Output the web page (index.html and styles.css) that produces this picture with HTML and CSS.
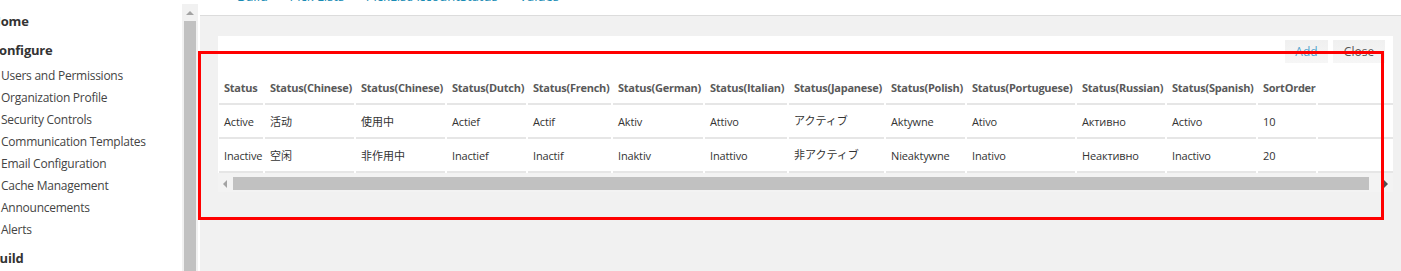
FILE: index.html
```html
<!DOCTYPE html>
<html lang="en">
<head>
<meta charset="utf-8">
<title>Picklist Values</title>
<link rel="stylesheet" href="styles.css">
</head>
<body>
<aside class="sidebar">
  <nav class="nav">
    <div class="nav-title first">Home</div>
    <div class="nav-title">Configure</div>
    <ul class="nav-list">
      <li>Users and Permissions</li>
      <li>Organization Profile</li>
      <li>Security Controls</li>
      <li>Communication Templates</li>
      <li>Email Configuration</li>
      <li>Cache Management</li>
      <li>Announcements</li>
      <li>Alerts</li>
    </ul>
    <div class="nav-title last">Build</div>
  </nav>
</aside>
<div class="vscroll">
  <div class="arrow-up"></div>
  <div class="vthumb"></div>
</div>
<main class="main">
  <div class="crumb-bar">
    <div class="crumb">Build &gt;&gt; Pick Lists &gt;&gt; PickListAccountStatus &gt;&gt; Values</div>
  </div>
  <div class="content">
    <section class="card">
      <div class="toolbar">
        <button class="btn btn-add">Add</button>
        <button class="btn btn-close">Close</button>
      </div>
      <div class="table-wrap">
        <table class="grid">
          <thead>
            <tr>
              <th class="w44">Status</th>
              <th class="w89">Status(Chinese)</th>
              <th class="w89">Status(Chinese)</th>
              <th class="w79">Status(Dutch)</th>
              <th class="w83">Status(French)</th>
              <th class="w90">Status(German)</th>
              <th class="w82">Status(Italian)</th>
              <th class="w95">Status(Japanese)</th>
              <th class="w79">Status(Polish)</th>
              <th class="w108">Status(Portuguese)</th>
              <th class="w88">Status(Russian)</th>
              <th class="w89">Status(Spanish)</th>
              <th class="w58">SortOrder</th>
              <th class="w75"></th>
            </tr>
          </thead>
          <tbody>
            <tr>
              <td>Active</td>
              <td class="cjk">活动</td>
              <td class="cjk">使用中</td>
              <td>Actief</td>
              <td>Actif</td>
              <td>Aktiv</td>
              <td>Attivo</td>
              <td class="cjk jp">アクティブ</td>
              <td>Aktywne</td>
              <td>Ativo</td>
              <td>Активно</td>
              <td>Activo</td>
              <td>10</td>
              <td></td>
            </tr>
            <tr>
              <td>Inactive</td>
              <td class="cjk">空闲</td>
              <td class="cjk">非作用中</td>
              <td>Inactief</td>
              <td>Inactif</td>
              <td>Inaktiv</td>
              <td>Inattivo</td>
              <td class="cjk jp">非アクティブ</td>
              <td>Nieaktywne</td>
              <td>Inativo</td>
              <td>Неактивно</td>
              <td>Inactivo</td>
              <td>20</td>
              <td></td>
            </tr>
          </tbody>
        </table>
      </div>
      <div class="hscroll">
        <div class="arrow-left"></div>
        <div class="hthumb"></div>
        <div class="arrow-right"></div>
      </div>
    </section>
  </div>
</main>
<div class="annotation"></div>
</body>
</html>
```

FILE: styles.css
```css
html, body {
  margin: 0;
  padding: 0;
}

body {
  font-family: "Open Sans", "Noto Sans", sans-serif;
  height: 271px;
  overflow: hidden;
  display: flex;
  background: #fff;
  position: relative;
}

/* Sidebar */
.sidebar {
  width: 182px;
  flex: none;
  overflow: hidden;
  background: #fff;
}

.nav {
  margin-left: -9px;
  padding-top: 3px;
  color: #333;
  white-space: nowrap;
}

.nav-title {
  font-weight: 700;
  font-size: 13px;
  line-height: 22px;
  margin: 7px 0 3px;
  color: #333;
  letter-spacing: -0.2px;
}

.nav-title.last {
  margin-top: 6px;
}

.nav-list {
  list-style: none;
  margin: 0;
  padding: 1px 0 0 10px;
}

.nav-list li {
  font-size: 12px;
  line-height: 22px;
  color: #444;
  letter-spacing: -0.25px;
}

/* Vertical scrollbar of sidebar */
.vscroll {
  width: 16px;
  flex: none;
  margin: 4px 2px 0 0;
  background: #f1f1f1;
  display: flex;
  flex-direction: column;
  align-items: center;
}

.arrow-up {
  width: 0;
  height: 0;
  margin-top: 7px;
  border-left: 4px solid transparent;
  border-right: 4px solid transparent;
  border-bottom: 4px solid #a3a3a3;
}

.vthumb {
  width: 12px;
  flex: 1;
  margin-top: 6px;
  background: #c1c1c1;
}

/* Main */
.main {
  flex: 1;
  min-width: 0;
  display: flex;
  flex-direction: column;
}

.crumb-bar {
  height: 15px;
  border-bottom: 1px solid #dcdcdc;
  overflow: hidden;
  background: #fff;
}

.crumb {
  margin-top: -13px;
  padding-left: 37px;
  font-size: 13px;
  line-height: 18px;
  color: #1a8cb4;
  white-space: nowrap;
}

.content {
  flex: 1;
  background: #f1f1f1;
  padding: 20px 8px 0 18px;
}

.card {
  background: #fff;
}

.toolbar {
  display: flex;
  justify-content: flex-end;
  gap: 5px;
  padding: 4px 8px 0;
}

.btn {
  height: 23px;
  border: none;
  background: linear-gradient(#f0f0f0, #f6f6f6);
  font-family: "Open Sans", sans-serif;
  font-size: 12px;
  padding: 0;
  cursor: pointer;
}

.btn-add {
  width: 43px;
  color: #4fa3cc;
}

.btn-close {
  width: 52px;
  color: #555;
}

.table-wrap {
  margin-top: 8px;
  overflow: hidden;
}

.grid {
  table-layout: fixed;
  border-collapse: separate;
  border-spacing: 2px 0;
  margin-left: -1px;
  width: 1178px;
  font-size: 11px;
}

.grid th,
.grid td {
  box-sizing: border-box;
  height: 34px;
  padding: 0 0 0 5px;
  border-bottom: 2px solid #e6e6e6;
  text-align: left;
  white-space: nowrap;
  overflow: hidden;
  vertical-align: middle;
}

.grid th {
  font-weight: 700;
  color: #595959;
  letter-spacing: -0.25px;
}

.grid td {
  color: #333;
  letter-spacing: -0.15px;
}

.grid .cjk {
  font-family: "Open Sans", "Noto Sans CJK SC", sans-serif;
  font-size: 11px;
  letter-spacing: 0;
}

.grid .jp {
  font-family: "Noto Sans CJK JP", sans-serif;
  font-size: 11px;
  padding-bottom: 3px;
}

.w44 { width: 44px; }
.w58 { width: 58px; }
.w75 { width: 75px; }
.w79 { width: 79px; }
.w82 { width: 82px; }
.w83 { width: 83px; }
.w88 { width: 88px; }
.w89 { width: 89px; }
.w90 { width: 90px; }
.w95 { width: 95px; }
.w108 { width: 108px; }

/* Horizontal scrollbar */
.hscroll {
  height: 19px;
  background: #f3f3f3;
  display: flex;
  align-items: center;
  padding: 2px 0 0 5px;
  box-sizing: border-box;
}

.arrow-left {
  width: 0;
  height: 0;
  border-top: 4px solid transparent;
  border-bottom: 4px solid transparent;
  border-right: 4px solid #a3a3a3;
}

.hthumb {
  flex: 1;
  height: 13px;
  margin: 0 0 0 6px;
  background: #c1c1c1;
}

.arrow-right {
  width: 0;
  height: 0;
  margin: 0 5px 0 15px;
  border-top: 4px solid transparent;
  border-bottom: 4px solid transparent;
  border-left: 4px solid #505050;
}

/* Red annotation frame drawn over the screenshot */
.annotation {
  position: absolute;
  left: 198px;
  top: 51px;
  width: 1186px;
  height: 169px;
  box-sizing: border-box;
  border: 3px solid #ff0000;
  pointer-events: none;
}
```
